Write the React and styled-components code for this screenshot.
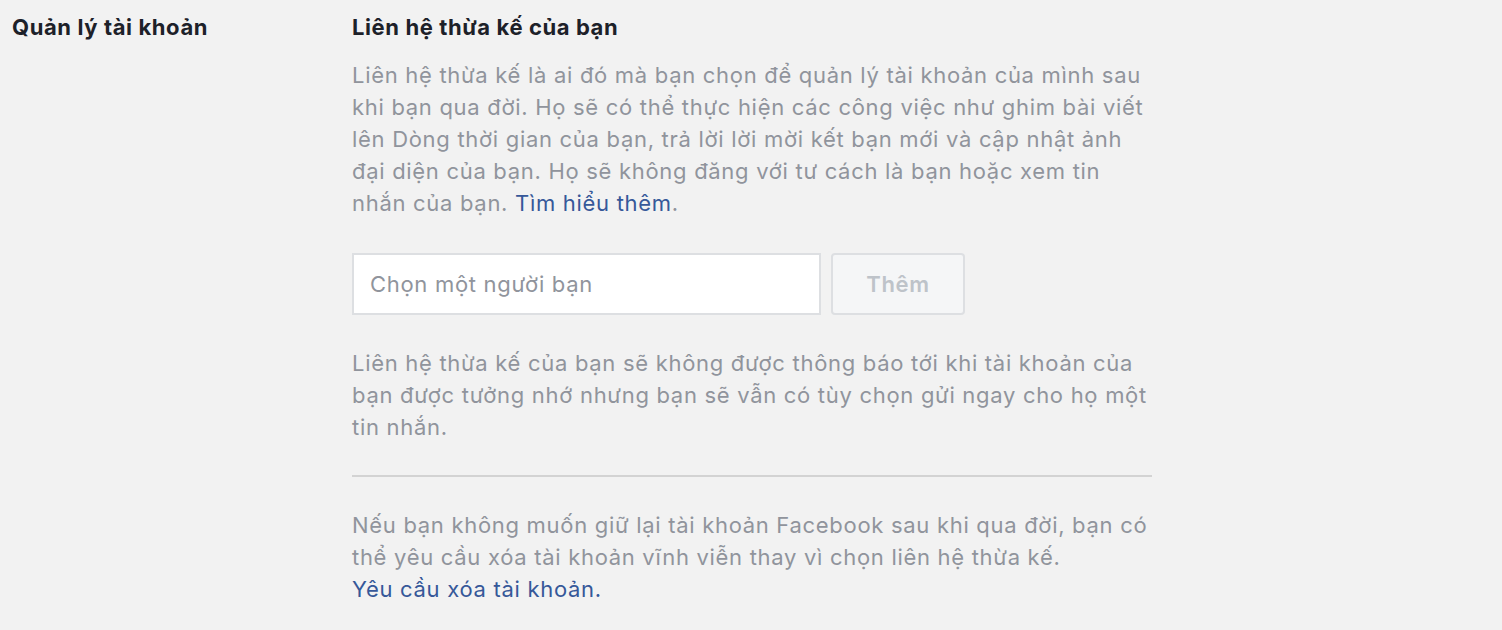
import React, { useState } from "react";
import styled, { createGlobalStyle } from "styled-components";

const GlobalStyle = createGlobalStyle`
  html, body {
    margin: 0;
    padding: 0;
    background: #f2f2f2;
  }
  body {
    font-family: Inter, "Noto Sans", sans-serif;
    font-size: 22px;
    letter-spacing: 0.7px;
    -webkit-font-smoothing: antialiased;
  }
`;

const App = () => {
  const [friend, setFriend] = useState("");

  return (
    <>
      <GlobalStyle />
      <Page>
        <SideLabel>Quản lý tài khoản</SideLabel>
        <Main>
          <Heading>Liên hệ thừa kế của bạn</Heading>
          <Text>
            Liên hệ thừa kế là ai đó mà bạn chọn để quản lý tài khoản của mình sau
            <br />
            khi bạn qua đời. Họ sẽ có thể thực hiện các công việc như ghim bài viết
            <br />
            lên Dòng thời gian của bạn, trả lời lời mời kết bạn mới và cập nhật ảnh
            <br />
            đại diện của bạn. Họ sẽ không đăng với tư cách là bạn hoặc xem tin
            <br />
            nhắn của bạn. <Link href="#">Tìm hiểu thêm</Link>.
          </Text>
          <PickerRow>
            <FriendInput
              placeholder="Chọn một người bạn"
              value={friend}
              onChange={(e) => setFriend(e.target.value)}
            />
            <AddButton disabled={!friend}>Thêm</AddButton>
          </PickerRow>
          <Text $top={32}>
            Liên hệ thừa kế của bạn sẽ không được thông báo tới khi tài khoản của
            <br />
            bạn được tưởng nhớ nhưng bạn sẽ vẫn có tùy chọn gửi ngay cho họ một
            <br />
            tin nhắn.
          </Text>
          <Divider />
          <Text $top={0}>
            Nếu bạn không muốn giữ lại tài khoản Facebook sau khi qua đời, bạn có
            <br />
            thể yêu cầu xóa tài khoản vĩnh viễn thay vì chọn liên hệ thừa kế.
            <br />
            <Link href="#">Yêu cầu xóa tài khoản.</Link>
          </Text>
        </Main>
      </Page>
    </>
  );
};

const Page = styled.div`
  display: grid;
  grid-template-columns: 340px 800px;
  padding: 11px 0 0 12px;
`;

const SideLabel = styled.div`
  font-weight: 700;
  line-height: 32px;
  letter-spacing: 0.6px;
  color: #1d2129;
`;

const Main = styled.div`
  display: flex;
  flex-direction: column;
`;

const Heading = styled.h2`
  margin: 0;
  font-size: 22px;
  font-weight: 700;
  line-height: 32px;
  letter-spacing: 0.6px;
  color: #1d2129;
`;

const Text = styled.p`
  margin: ${(p) => (p.$top ?? 16)}px 0 0;
  line-height: 32px;
  white-space: nowrap;
  color: #90949c;
`;

const Link = styled.a`
  color: #365899;
  text-decoration: none;
`;

const PickerRow = styled.div`
  display: flex;
  gap: 10px;
  margin-top: 34px;
`;

const FriendInput = styled.input`
  box-sizing: border-box;
  width: 469px;
  height: 62px;
  padding: 0 16px;
  border: 2px solid #dddfe2;
  background: #fff;
  font-family: inherit;
  font-size: 22px;
  letter-spacing: 0.7px;
  color: #1d2129;
  outline: none;
  &::placeholder {
    color: #90949c;
  }
`;

const AddButton = styled.button`
  box-sizing: border-box;
  width: 134px;
  height: 62px;
  border: 2px solid #dddfe2;
  border-radius: 4px;
  background: #f5f6f7;
  font-family: inherit;
  font-size: 22px;
  font-weight: 600;
  letter-spacing: 0.7px;
  color: ${(p) => (p.disabled ? "#bec3c9" : "#4b4f56")};
`;

const Divider = styled.hr`
  width: 800px;
  margin: 32px 0 32px;
  border: 0;
  border-top: 2px solid #d3d3d3;
`;

export default App;
